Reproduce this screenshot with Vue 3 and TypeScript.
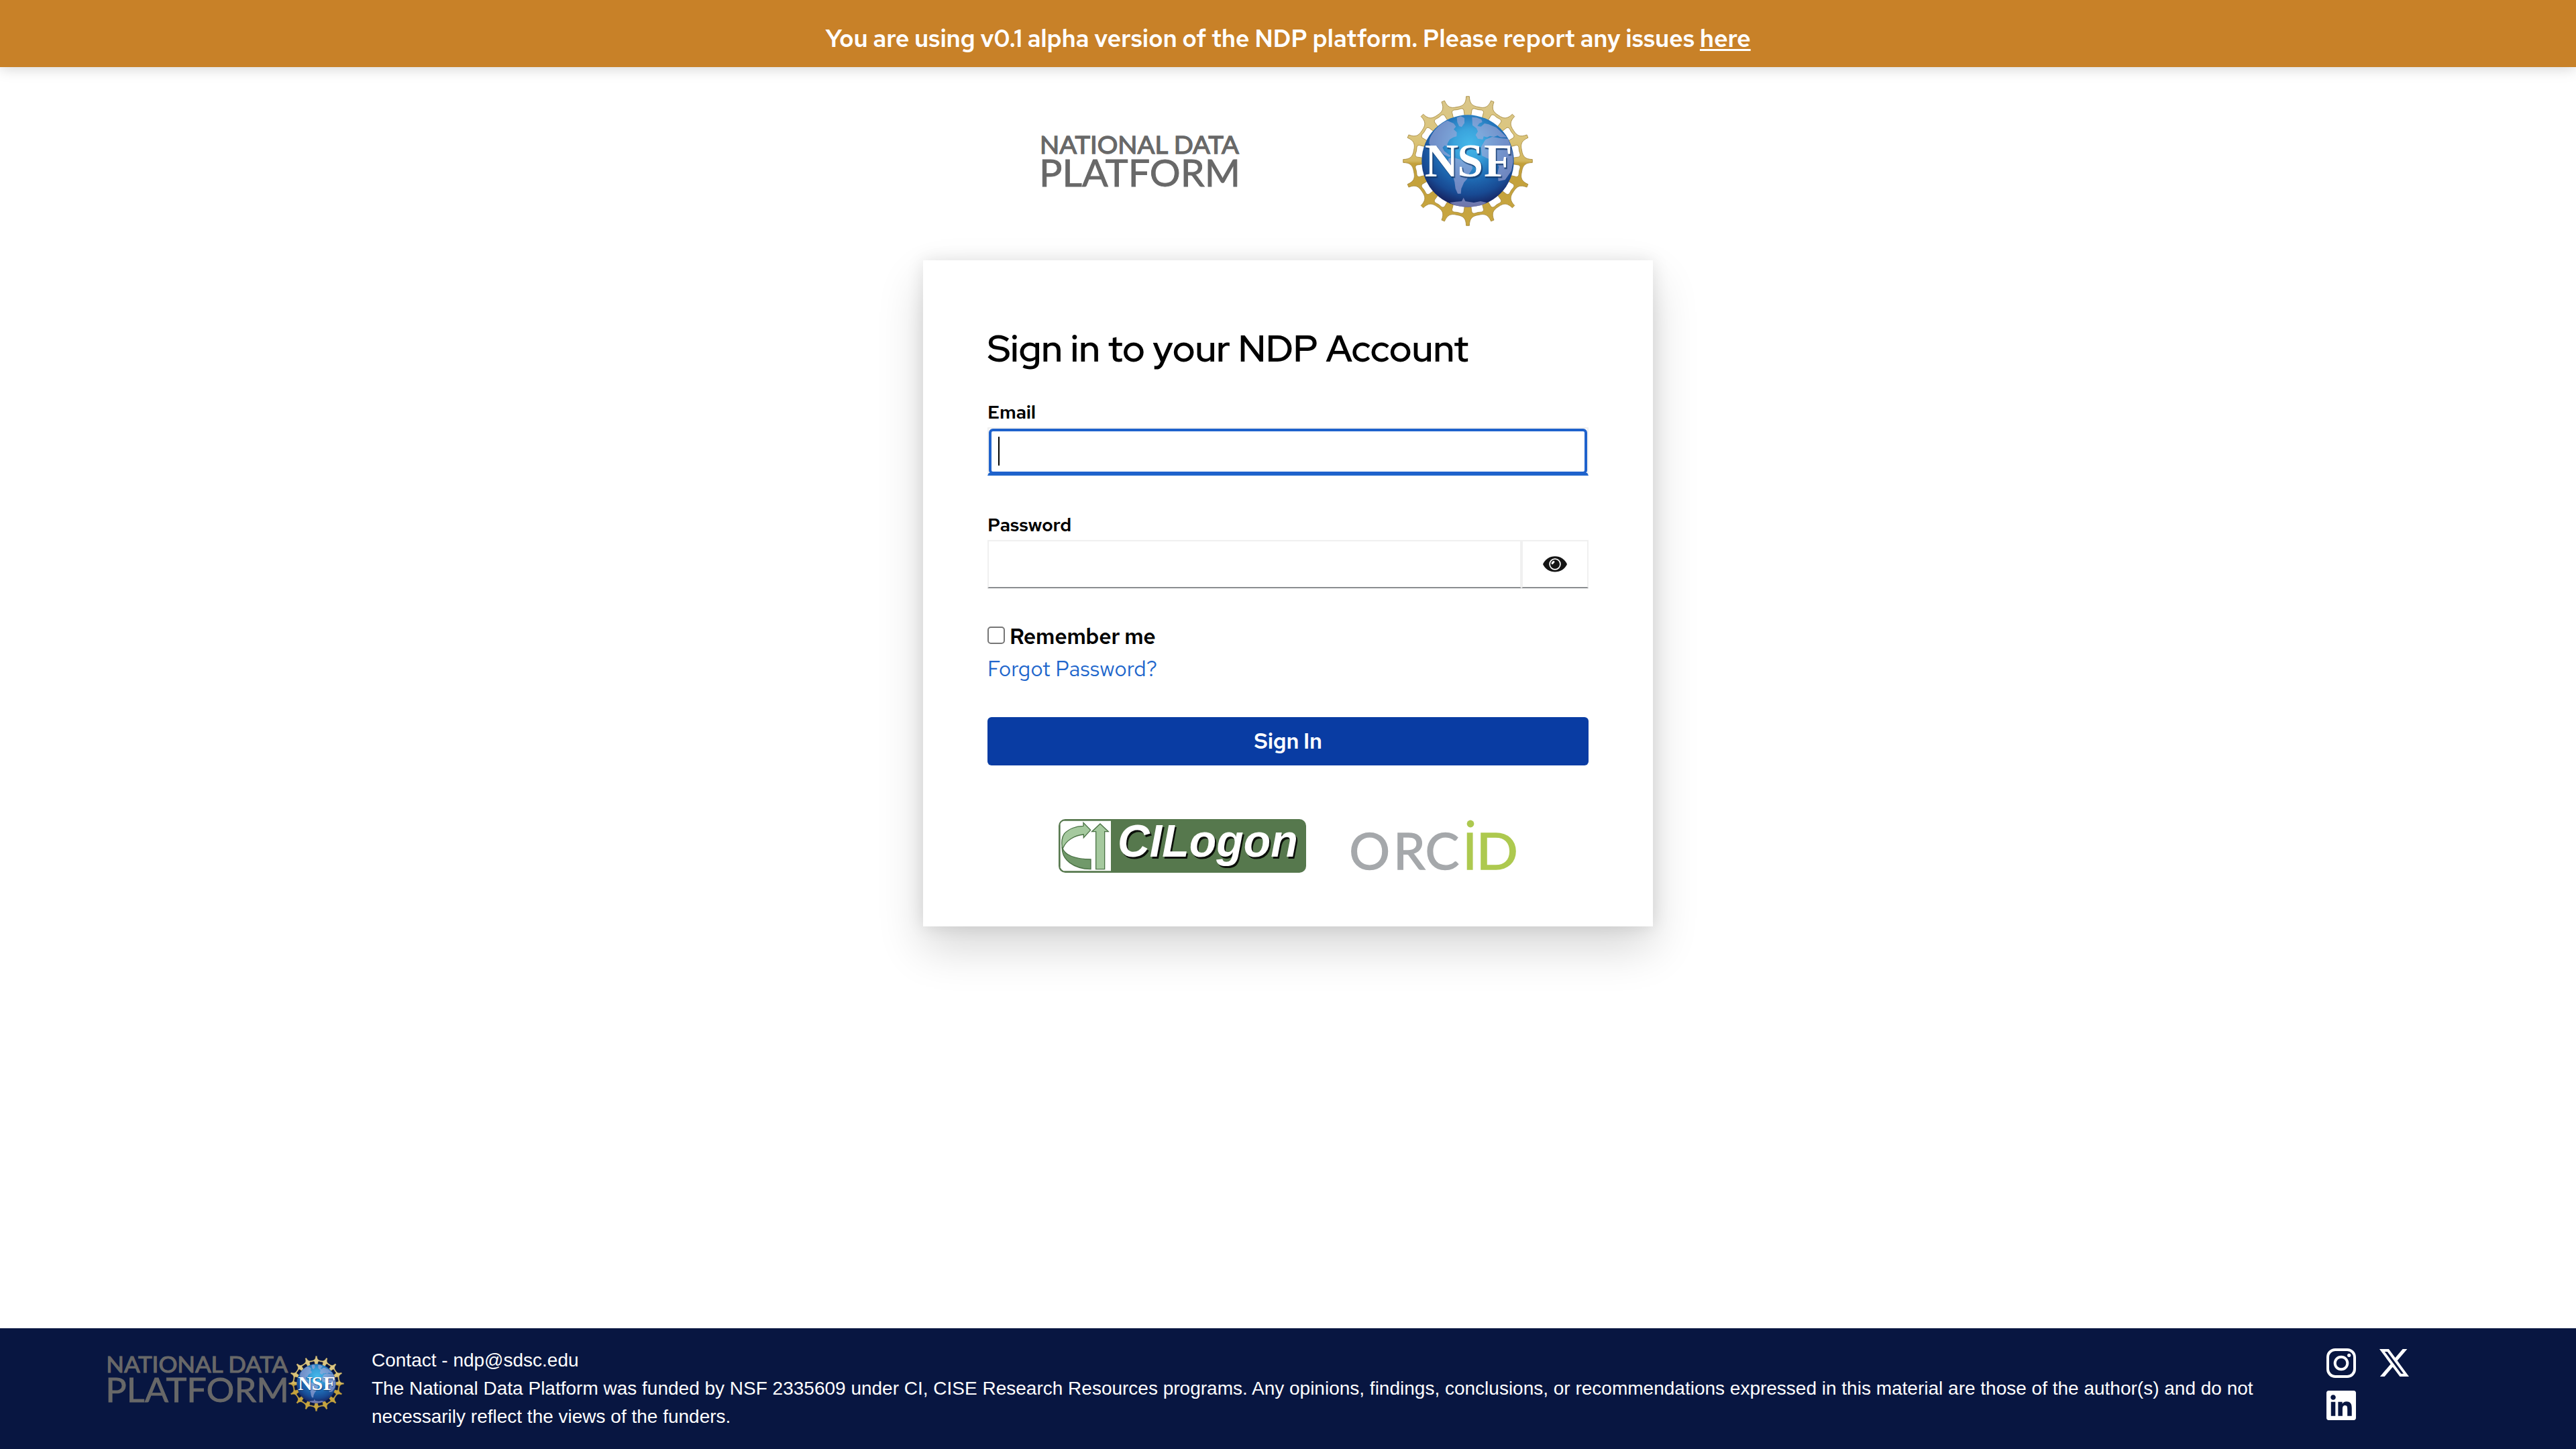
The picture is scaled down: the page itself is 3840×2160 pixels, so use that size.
<script setup lang="ts">
import { defineComponent, h } from 'vue'

const polar = (deg: number, r: number): string => {
  const a = (deg * Math.PI) / 180
  return `${(r * Math.sin(a)).toFixed(1)} ${(-r * Math.cos(a)).toFixed(1)}`
}

const steps = Array.from({ length: 16 }, (_, i) => i * 22.5)

// Outer contour of the golden ring: sixteen tips joined by hollow arcs.
const contour =
  'M' +
  steps
    .map(
      (a) =>
        `${polar(a - 1.4, 289)} L${polar(a + 1.4, 289)} C${polar(a + 1.8, 258)} ${polar(a + 4.2, 247)} ${polar(a + 11.25, 246)} C${polar(a + 18.3, 247)} ${polar(a + 20.7, 258)} ${polar(a + 21.1, 289)}`,
    )
    .join(' L') +
  'Z'

// Rounded windows between the figures.
const windows = steps
  .map(
    (a) =>
      `M${polar(a + 3.9, 200)} L${polar(a + 4.4, 222)} Q${polar(a + 4.2, 237)} ${polar(a + 7.5, 236)} L${polar(a + 11.25, 234)} L${polar(a + 15, 236)} Q${polar(a + 18.3, 237)} ${polar(a + 18.1, 222)} L${polar(a + 18.6, 200)}Z`,
  )
  .join('')

const land = [
  'M182 250 C190 225 215 190 248 172 L262 165 L276 172 L290 178 L300 192 L290 204 L304 218 L303 236 L288 240 L272 250 L262 268 L262 282 L250 276 L240 286 L248 302 L262 312 L276 322 L270 328 L248 318 L226 300 L205 286 L190 282 L180 268Z',
  'M304 152 L322 146 L338 154 L338 176 L326 194 L314 190 L306 172Z',
  'M268 334 L290 330 L320 340 L342 352 L372 362 L374 380 L360 402 L350 426 L336 442 L324 470 L322 492 L308 492 L298 470 L294 440 L286 410 L270 380 L262 356Z',
  'M372 150 L392 152 L414 160 L418 172 L404 178 L396 190 L412 192 L428 178 L446 182 L480 196 L504 218 L528 240 L500 240 L486 232 L470 238 L452 234 L440 240 L424 236 L420 250 L398 246 L388 230 L398 214 L392 200 L374 186Z',
  'M432 250 L462 238 L500 244 L532 246 C548 280 556 315 556 350 L548 390 L520 430 L490 436 L486 400 L492 372 L478 346 L440 334 L416 322 L412 284Z',
  'M272 532 L300 528 L326 526 L334 510 L342 526 L380 532 L410 526 L438 532 C415 546 385 552 353 552 C322 552 295 546 272 532Z',
]

const NsfSeal = defineComponent({
  props: { uid: { type: String, required: true } },
  setup(props) {
    return () =>
      h('svg', { viewBox: '53 46 600 600', role: 'img', 'aria-label': 'NSF' }, [
        h('defs', [
          h('linearGradient', { id: props.uid + 'gold', x1: 0, y1: 0, x2: 0, y2: 1 }, [
            h('stop', { offset: '0', 'stop-color': '#d9c68a' }),
            h('stop', { offset: '.3', 'stop-color': '#dcc67e' }),
            h('stop', { offset: '.5', 'stop-color': '#d3b75e' }),
            h('stop', { offset: '.52', 'stop-color': '#c3a03a' }),
            h('stop', { offset: '1', 'stop-color': '#c8a640' }),
          ]),
          h('radialGradient', { id: props.uid + 'sea', cx: 0.52, cy: 0.32, r: 0.68 }, [
            h('stop', { offset: '0', 'stop-color': '#45b8ea' }),
            h('stop', { offset: '.25', 'stop-color': '#3aa3dc' }),
            h('stop', { offset: '.55', 'stop-color': '#1f6bb4' }),
            h('stop', { offset: '.8', 'stop-color': '#184a93' }),
            h('stop', { offset: '1', 'stop-color': '#16205c' }),
          ]),
        ]),
        h('path', {
          d: contour + windows,
          transform: 'translate(353 346)',
          fill: `url(#${props.uid}gold)`,
          'fill-rule': 'evenodd',
          stroke: '#a3873b',
          'stroke-width': 2.5,
          'stroke-linejoin': 'round',
        }),
        h('circle', { cx: 353, cy: 346, r: 206, fill: `url(#${props.uid}sea)` }),
        h('g', { fill: '#a6a9d8', 'fill-opacity': 0.62 }, land.map((d) => h('path', { d }))),
        h(
          'g',
          { 'font-family': '"Liberation Serif", serif', 'font-weight': 700, 'font-size': 209 },
          [
            h('text', { x: '164 310 429', y: 420, fill: '#143a6c', 'fill-opacity': 0.75, stroke: '#143a6c', 'stroke-opacity': 0.4, 'stroke-width': 5 }, 'NSF'),
            h('text', { x: '160 306 425', y: 415, fill: '#fff' }, 'NSF'),
          ],
        ),
      ])
  },
})

const NdpLogo = defineComponent({
  setup() {
    return () =>
      h(
        'svg',
        { viewBox: '0 0 294 78', preserveAspectRatio: 'none', fill: '#686868', stroke: '#686868', 'font-family': 'Lato, sans-serif' },
        [
          h('text', { x: -3, y: 28, 'font-size': 37.5, 'stroke-width': 1.3, textLength: 297, lengthAdjust: 'spacingAndGlyphs' }, 'NATIONAL DATA'),
          h('text', { x: -4, y: 77.3, 'font-size': 57, 'stroke-width': 0.9, textLength: 300, lengthAdjust: 'spacingAndGlyphs' }, 'PLATFORM'),
        ],
      )
  },
})
</script>

<template>
  <div class="page">
    <div class="banner">
      <span class="banner-text">You are using v0.1 alpha version of the NDP platform. Please report any issues <a>here</a></span>
    </div>

    <header class="brands">
      <NdpLogo class="ndp" />
      <NsfSeal class="nsf" uid="top" />
    </header>

    <main class="card">
      <h1>Sign in to your NDP Account</h1>

      <label class="label email">Email</label>
      <div class="field focused"><div class="ring"><span class="caret"></span></div></div>

      <label class="label password">Password</label>
      <div class="group">
        <div class="field grow"></div>
        <button class="field reveal" type="button" aria-label="Show password">
          <svg viewBox="0 0 36 24">
            <path d="M0 12C3 5 10 .3 18 .3S33 5 36 12C33 19 26 23.5 18 23.5S3 19 0 12Z" fill="#151515" />
            <circle cx="18" cy="12" r="7.9" fill="#151515" stroke="#fff" stroke-width="1.7" />
            <path d="M12.6 11.6C12.4 9 14.2 7 16.7 6.9C17.6 7.6 17.6 9 17 9.8C16 10.5 15.6 11 15.2 11.8C14.4 12.5 13.2 12.5 12.6 11.6Z" fill="#fff" />
          </svg>
        </button>
      </div>

      <div class="remember"><span class="box"></span><span class="remember-text">Remember me</span></div>
      <div class="forgot"><a>Forgot Password?</a></div>

      <button class="submit" type="button">Sign In</button>

      <div class="providers">
        <svg class="cilogon" viewBox="54 63 1107 240">
          <rect x="54" y="63" width="1107" height="240" rx="30" fill="#56784d" />
          <path d="M62 84Q66 74 76 71H288V295H76Q66 290 62 280Z" fill="#fff" />
          <g stroke="#4c7346" stroke-width="4" stroke-linejoin="miter">
            <path d="M72 192C80 225 130 242 198 243V287C120 285 68 245 70 190Z" fill="#71996a" />
            <path d="M70 192C66 165 68 145 80 128C98 108 130 94 165 94V79L197 112L166 146V132C125 136 88 158 74 192Z" fill="#a5c99e" />
            <path d="M240 84L277 119H260V287H221V119H203Z" fill="#a5c99e" />
          </g>
          <g font-family="'Liberation Sans', Arial, sans-serif" font-weight="700" font-style="italic" font-size="203">
            <text x="325" y="239" fill="#0b0f0a" textLength="806" lengthAdjust="spacingAndGlyphs">CILogon</text>
            <text x="318" y="232" fill="#fff" textLength="806" lengthAdjust="spacingAndGlyphs">CILogon</text>
          </g>
        </svg>
        <svg class="orcid" viewBox="0 0 246 80" font-family="Lato, sans-serif" font-size="76" stroke-width="1.4">
          <text x="-2.8 63 110.5" y="75" fill="#a5a8ab" stroke="#a5a8ab">ORC</text>
          <text x="166.5" y="75" fill="#adc94f" stroke="#adc94f">I</text>
          <text x="186.5" y="75" fill="#adc94f" stroke="#adc94f" textLength="62.5" lengthAdjust="spacingAndGlyphs">D</text>
          <circle cx="178" cy="7" r="5.4" fill="#adc94f" />
        </svg>
      </div>
    </main>

    <footer class="footer">
      <NdpLogo class="ndp-small" />
      <NsfSeal class="nsf-small" uid="foot" />
      <div class="legal">
        <p>Contact - ndp@sdsc.edu</p>
        <p>The National Data Platform was funded by NSF 2335609 under CI, CISE Research Resources programs. Any opinions, findings, conclusions, or recommendations expressed in this material are those of the author(s) and do not necessarily reflect the views of the funders.</p>
      </div>
      <div class="social">
        <svg viewBox="0 0 44 44" width="44" height="44" fill="none" stroke="#fff" stroke-width="4">
          <rect x="2" y="2" width="40" height="40" rx="11" />
          <circle cx="22" cy="22" r="9.3" />
          <circle cx="33.7" cy="10.3" r="2.6" fill="#fff" stroke="none" />
        </svg>
        <svg class="x" viewBox="26.8 48 460.2 416" width="44" height="41" fill="#fff" preserveAspectRatio="none">
          <path d="M389.2 48h70.6L305.6 224.2 487 464H345L233.7 318.6 106.5 464H35.8L200.7 275.5 26.8 48H172.4L272.9 180.9 389.2 48zM364.4 421.8h39.1L151.1 88h-42L364.4 421.8z" />
        </svg>
        <svg viewBox="0 32 448 448" width="44" height="44" fill="#fff">
          <path d="M416 32H31.9C14.3 32 0 46.5 0 64.3v383.4C0 465.5 14.3 480 31.9 480H416c17.6 0 32-14.5 32-32.3V64.3c0-17.8-14.4-32.3-32-32.3zM135.4 416H69V202.2h66.5V416zm-33.2-243c-21.3 0-38.5-17.3-38.5-38.5S80.9 96 102.2 96c21.2 0 38.5 17.3 38.5 38.5 0 21.3-17.2 38.5-38.5 38.5zm282.1 243h-66.4V312c0-24.8-.5-56.7-34.5-56.7-34.6 0-39.9 27-39.9 54.9V416h-66.4V202.2h63.7v29.2h.9c8.9-16.8 30.6-34.5 62.9-34.5 67.2 0 79.7 44.3 79.7 101.9V416z" />
        </svg>
      </div>
    </footer>
  </div>
</template>

<style scoped>
.page {
  display: flex;
  flex-direction: column;
  width: 3840px;
  height: 2160px;
  background: #fff;
  color: #000;
  font-family: 'Red Hat Text', Inter, sans-serif;
}
svg {
  display: block;
  flex: none;
  overflow: visible;
}
.banner {
  box-sizing: border-box;
  height: 100px;
  padding-top: 14px;
  line-height: 86px;
  text-align: center;
  background: #c88128;
  color: #fff;
  font-size: 36px;
  font-weight: 600;
  letter-spacing: -0.23px;
  box-shadow: 0 2px 20px rgba(0, 0, 0, 0.18);
}
.banner a {
  text-decoration: underline;
  text-decoration-thickness: 3px;
  text-underline-offset: 3px;
}
.brands {
  box-sizing: border-box;
  display: flex;
  align-items: center;
  justify-content: center;
  gap: 241px;
  height: 288px;
  padding-bottom: 8px;
}
.ndp {
  width: 294px;
  height: 78px;
}
.nsf {
  width: 200px;
  height: 200px;
}
.card {
  box-sizing: border-box;
  width: 1088px;
  height: 993px;
  margin: 0 auto;
  padding: 95px 96px 0;
  background: #fff;
  box-shadow: 0 32px 64px rgba(0, 0, 0, 0.16), 0 0 24px rgba(0, 0, 0, 0.1);
}
h1 {
  margin: 0 0 41px;
  font-family: 'Red Hat Display', 'Red Hat Text', Inter, sans-serif;
  font-size: 56px;
  line-height: 72px;
  font-weight: 600;
  white-space: nowrap;
}
.label {
  display: block;
  margin-bottom: 5px;
  font-size: 28px;
  line-height: 36px;
  font-weight: 600;
  letter-spacing: -0.25px;
}
.field {
  box-sizing: border-box;
  height: 72px;
  border: 2px solid #f0f0f0;
  border-bottom-color: #8a8d90;
  background: #fff;
}
.focused {
  margin-bottom: 55px;
  border-bottom: 4px solid #2066cc;
}
.ring {
  box-sizing: border-box;
  display: flex;
  height: 68px;
  padding: 8px 10px;
  border: 4px solid #1f62cc;
  border-radius: 6px;
}
.caret {
  width: 2px;
  height: 43px;
  background: #000;
}
.group {
  display: flex;
  margin-bottom: 48px;
}
.grow {
  flex: 1;
}
.reveal {
  display: flex;
  align-items: center;
  justify-content: center;
  width: 100px;
  padding: 0;
}
.reveal svg {
  width: 36px;
  height: 24px;
}
.remember {
  display: flex;
  align-items: center;
  gap: 7px;
  height: 48px;
  font-size: 32px;
  line-height: 48px;
  font-weight: 600;
  letter-spacing: -0.2px;
}
.box {
  box-sizing: border-box;
  width: 26px;
  height: 26px;
  margin-top: -4px;
  border: 2px solid #767676;
  border-radius: 5px;
}
.forgot {
  height: 48px;
  margin-bottom: 48px;
  color: #2066cc;
  font-size: 32px;
  line-height: 48px;
}
.submit {
  display: block;
  width: 896px;
  height: 72px;
  margin-bottom: 80px;
  padding: 0;
  border: 0;
  border-radius: 6px;
  background: #093ca3;
  color: #fff;
  font-family: inherit;
  font-size: 32px;
  line-height: 72px;
  font-weight: 600;
  letter-spacing: -0.2px;
}
.providers {
  display: flex;
  gap: 67px;
  margin-left: 106px;
}
.cilogon {
  width: 369px;
  height: 80px;
}
.orcid {
  width: 246px;
  height: 80px;
}
.footer {
  box-sizing: border-box;
  display: flex;
  align-items: flex-start;
  height: 180px;
  margin-top: auto;
  padding: 0 0 0 161px;
  background: #081641;
  color: #fff;
}
.ndp-small {
  width: 268px;
  height: 70px;
  margin-top: 41px;
}
.nsf-small {
  width: 85px;
  height: 85px;
  margin-top: 40px;
}
.legal {
  width: 2830px;
  margin: 27px 0 0 40px;
  font-family: 'Liberation Sans', Arial, sans-serif;
  font-size: 28px;
  line-height: 42px;
}
.legal p {
  margin: 0;
}
.social {
  display: grid;
  grid-template-columns: 79px 79px;
  grid-auto-rows: 63px;
  margin: 30px 0 0 84px;
}
.x {
  margin-top: 1px;
}
</style>

<style>
body {
  margin: 0;
  overflow: hidden;
}
</style>
